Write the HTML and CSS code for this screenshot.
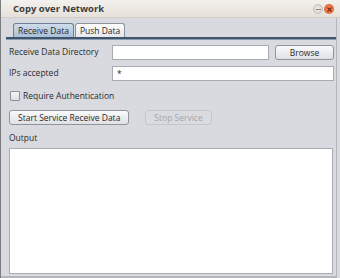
FILE: index.html
```html
<!DOCTYPE html>
<html lang="en">
  <head>
    <meta charset="UTF-8" />
    <title>Copy over Network</title>
    <link rel="stylesheet" href="styles.css">
  </head>
  <body>
    <div class="window">
      <div class="titleBar">
        <span class="title">Copy over Network</span>
        <div class="titleButtons">
          <span class="winBtn minBtn"><span class="minBar"></span></span>
          <span class="winBtn closeBtn">
            <svg width="5" height="5" viewBox="0 0 5 5">
              <path d="M0.5 0.5 L4.5 4.5 M4.5 0.5 L0.5 4.5" stroke="#7a2a10" stroke-width="1.2" />
            </svg>
          </span>
        </div>
      </div>
      <div class="frame">
        <div class="tabs">
          <div class="tab active">Receive Data</div>
          <div class="tab">Push Data</div>
        </div>
        <div class="tabLine"></div>
        <div class="panel">
          <div class="row">
            <label class="rowLabel">Receive Data Directory</label>
            <div class="field dirField"></div>
            <button class="btn browse">Browse</button>
          </div>
          <div class="row">
            <label class="rowLabel">IPs accepted</label>
            <div class="field ipField">*</div>
          </div>
          <div class="checkRow">
            <span class="checkbox"></span>
            <span>Require Authentication</span>
          </div>
          <div class="buttonRow">
            <button class="btn">Start Service Receive Data</button>
            <button class="btn disabled">Stop Service</button>
          </div>
          <div class="outputLabel">Output</div>
          <div class="output"></div>
        </div>
      </div>
    </div>
  </body>
</html>
```

FILE: styles.css
```css
body,
html {
  margin: 0;
  padding: 0;
  width: 340px;
  height: 278px;
  overflow: hidden;
  font-family: 'Open Sans', 'DejaVu Sans', sans-serif;
  font-size: 8.5px;
  line-height: 12px;
  color: #2a2a2a;
}

.window {
  display: flex;
  flex-direction: column;
  width: 340px;
  height: 278px;
  background-color: #d8dae0;
  border-left: 1px solid #7c7c7c;
  box-sizing: border-box;
}

.titleBar {
  display: flex;
  justify-content: space-between;
  align-items: center;
  height: 17px;
  padding: 0 6px 0 12px;
  background: linear-gradient(#f3f1ed, #e6e1da);
  border-bottom: 1px solid #d2cdc6;
}

.title {
  font-weight: 700;
  font-size: 9.5px;
  color: #3c3c3c;
}

.titleButtons {
  display: flex;
  gap: 1px;
  padding-top: 1px;
}

.winBtn {
  display: flex;
  justify-content: center;
  align-items: center;
  width: 10px;
  height: 10px;
  border-radius: 50%;
}

.minBtn {
  background: radial-gradient(#f4f2ef, #cfcbc5);
  border: 0.5px solid #c4c0ba;
  box-sizing: border-box;
}

.minBar {
  width: 5px;
  height: 1px;
  background-color: #8a8680;
}

.closeBtn {
  background: radial-gradient(#f49061, #e0592a);
}

.frame {
  display: flex;
  flex-direction: column;
  flex: 1;
  margin-right: 3px;
  border-right: 1px solid #b4b7bd;
  border-bottom: 2px solid #b4b7bd;
}

.tabs {
  display: flex;
  align-items: flex-end;
  padding: 5px 0 0 12px;
  height: 14px;
}

.tab {
  display: flex;
  align-items: center;
  height: 13px;
  padding: 0 4px;
  margin-right: 1px;
  border: 1px solid #8e9399;
  border-bottom: none;
  border-radius: 3px 3px 0 0;
  background: linear-gradient(#fbfbfc, #e6e8ec);
}

.tab.active {
  background: linear-gradient(#cfdcea, #a9c0d8);
  border-color: #6d7f93;
}

.tabLine {
  height: 2px;
  margin-left: 5px;
  background-color: #3f556d;
  border-bottom: 1px solid #8b9bae;
}

.panel {
  display: flex;
  flex-direction: column;
  flex: 1;
  padding: 4px 0 2px 8px;
}

.row {
  display: flex;
  align-items: center;
  height: 16px;
  margin-bottom: 5px;
}

.rowLabel {
  width: 103px;
}

.field {
  height: 15px;
  box-sizing: border-box;
  background-color: #fff;
  border: 1px solid #a7abb2;
  padding: 1px 4px;
  line-height: 11px;
}

.dirField {
  width: 157px;
}

.ipField {
  width: 222px;
}

.btn {
  height: 15px;
  padding: 0 8px;
  font-family: inherit;
  font-size: 8.5px;
  color: #2a2a2a;
  border: 1px solid #90949b;
  border-radius: 3px;
  background: linear-gradient(#fafafb, #dfe1e5);
  box-sizing: border-box;
}

.browse {
  width: 59px;
  margin-left: 6px;
}

.checkRow {
  display: flex;
  align-items: center;
  gap: 3px;
  height: 11px;
  margin: 4px 0 9px 1px;
}

.checkbox {
  width: 8px;
  height: 8px;
  border: 1px solid #8c9096;
  border-radius: 1px;
  background: linear-gradient(#f5f6f7, #dcdee2);
}

.buttonRow {
  display: flex;
  gap: 16px;
  margin-bottom: 7px;
}

.btn.disabled {
  color: #a4a7ac;
  border-color: #c4c7cc;
  background: #d9dbe0;
}

.outputLabel {
  margin-bottom: 4px;
}

.output {
  flex: 1;
  width: 324px;
  background-color: #fff;
  border: 1px solid #a7abb2;
  box-sizing: border-box;
}
```
